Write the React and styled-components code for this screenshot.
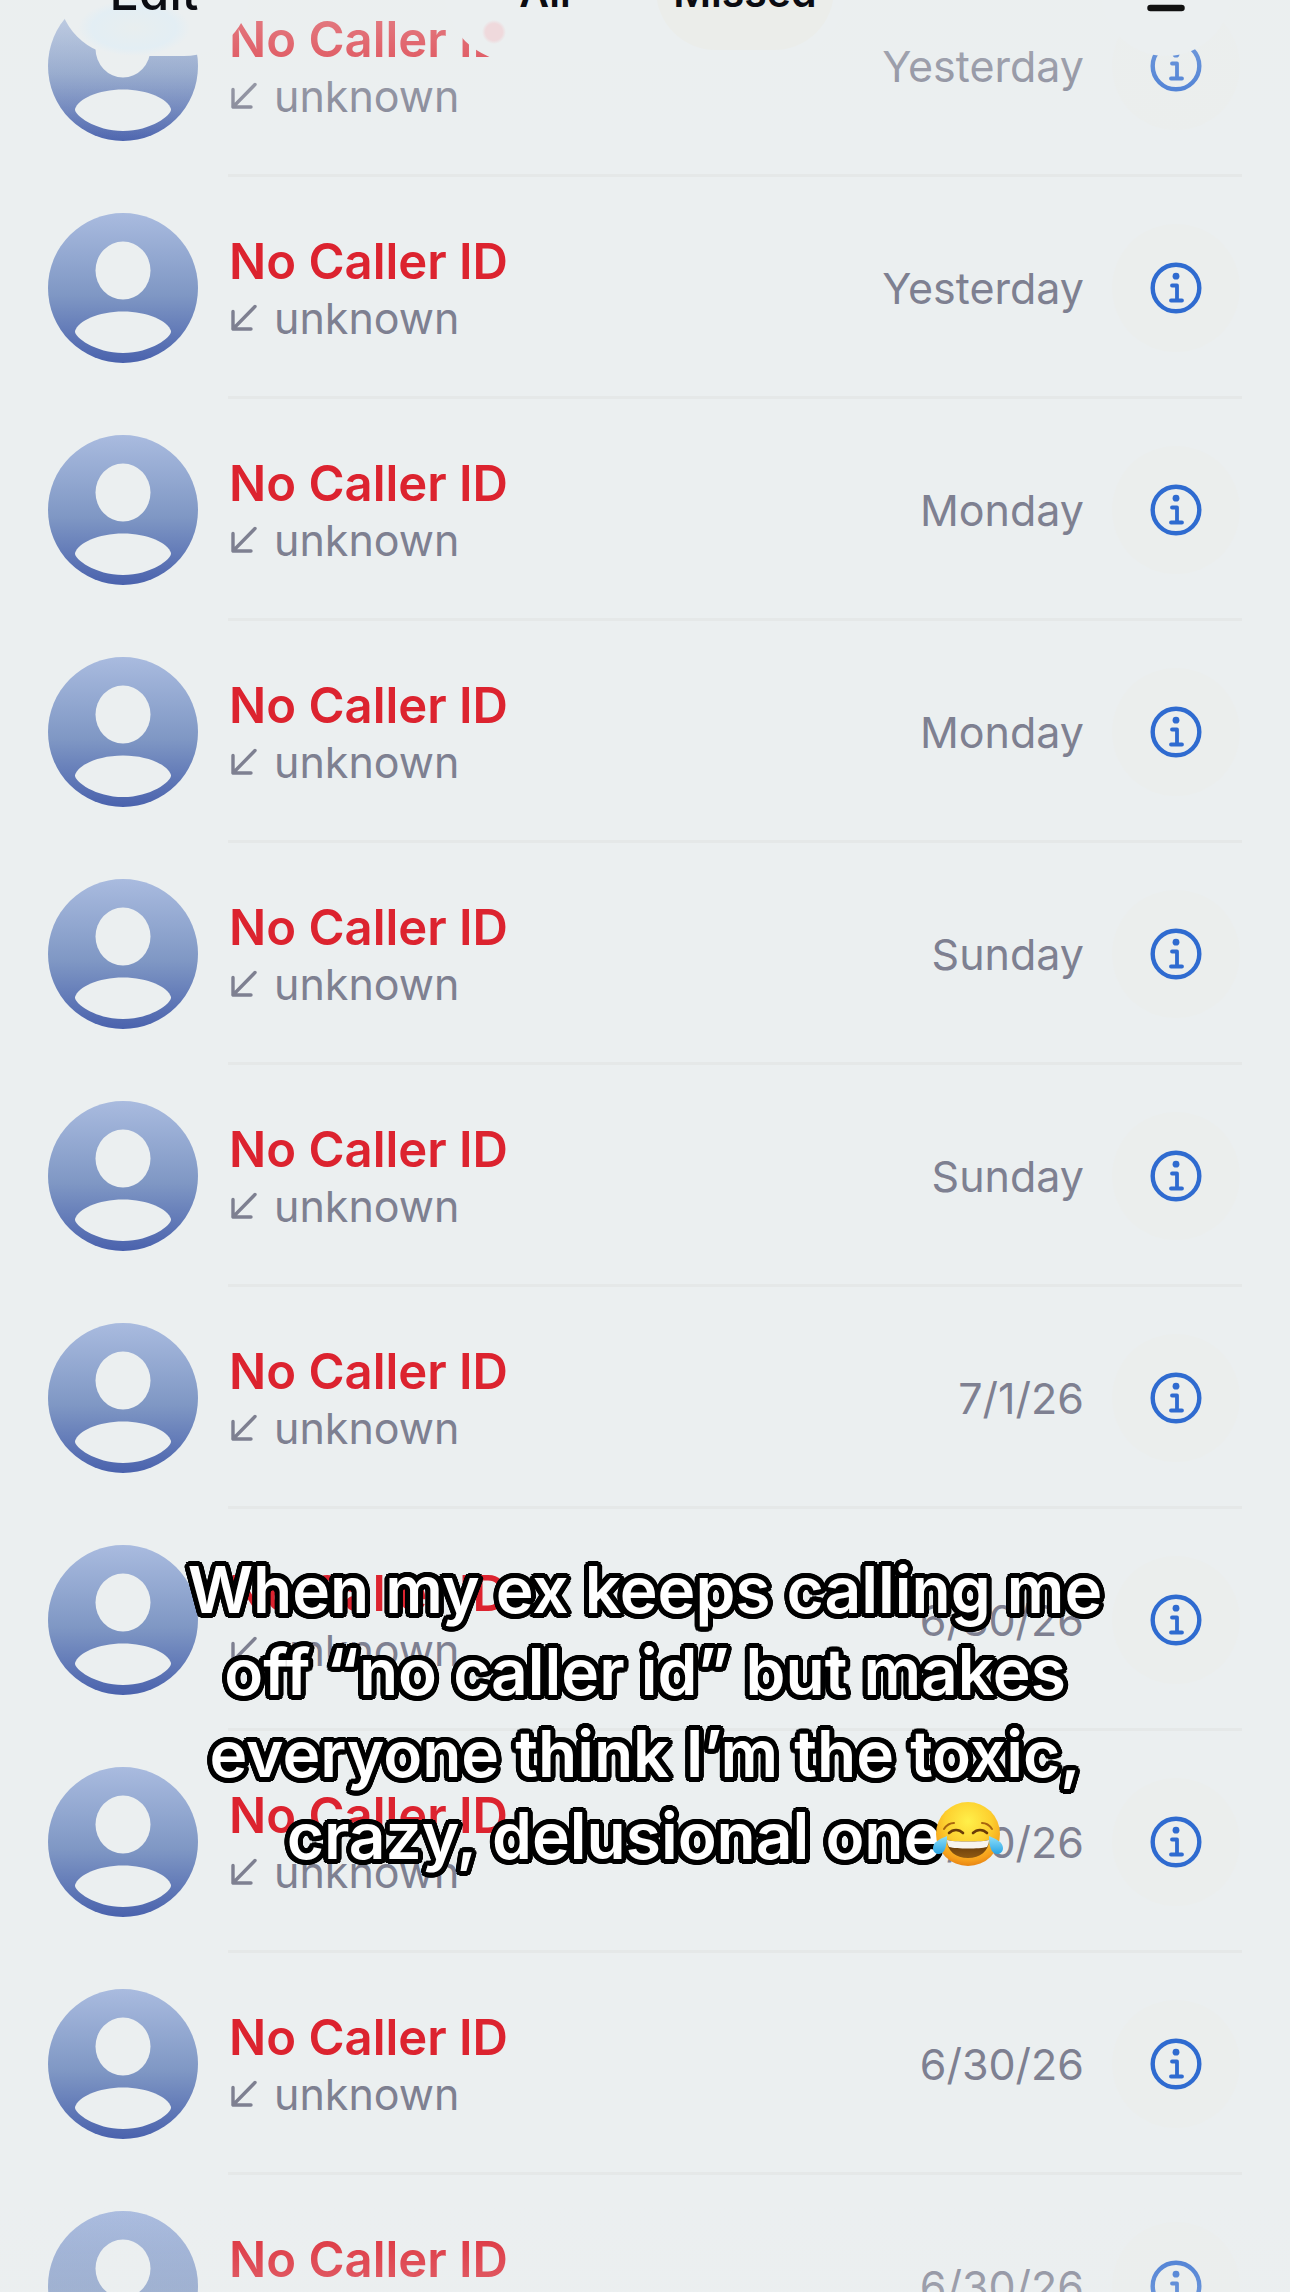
import React from "react";
import styled, { createGlobalStyle } from "styled-components";

const calls = [
  { id: 1, day: "Yesterday" },
  { id: 2, day: "Yesterday" },
  { id: 3, day: "Monday" },
  { id: 4, day: "Monday" },
  { id: 5, day: "Sunday" },
  { id: 6, day: "Sunday" },
  { id: 7, day: "7/1/26" },
  { id: 8, day: "6/30/26" },
  { id: 9, day: "6/30/26" },
  { id: 10, day: "6/30/26" },
  { id: 11, day: "6/30/26" }
];

// ring of hard shadows, gives the caption its round black outline
const outline = Array.from({ length: 24 }, (_, i) => {
  const a = (i / 24) * Math.PI * 2;
  return `${(Math.cos(a) * 5).toFixed(2)}px ${(Math.sin(a) * 5).toFixed(2)}px 0 #000`;
}).join(", ");

const GlobalStyle = createGlobalStyle`
  * {
    box-sizing: border-box;
  }

  body {
    margin: 0;
    background: #ebeff0;
    font-family: Inter, "Liberation Sans", sans-serif;
  }

  button {
    padding: 0;
    border: none;
    background: none;
    font-family: inherit;
    cursor: pointer;
  }
`;

const Screen = styled.main`
  position: relative;
  height: 100vh;
  overflow: hidden;
  background: #ebeff0;
`;

const Toolbar = styled.header`
  position: absolute;
  z-index: 2;
  top: -82px;
  left: 0;
  right: 0;
  padding: 0 58px;
  display: grid;
  grid-template-columns: 1fr auto 1fr;
  align-items: center;
`;

const EditButton = styled.button`
  justify-self: start;
  width: 192px;
  height: 132px;
  padding-top: 4px;
  border-radius: 66px;
  background: radial-gradient(
      ellipse 56px 28px at 76px 104px,
      #e8eeef 0,
      #e3eef4 75%,
      transparent 100%
    ),
    #ebeff0;
  color: #0b0c12;
  font-size: 49px;
  font-weight: 500;
`;

const Segments = styled.div`
  display: flex;
  gap: 22px;
  padding: 12px;
  border-radius: 72px;
  background: radial-gradient(circle 12px at 50px 114px, #efd9dc 0 70%, transparent 100%),
    #ebeff0;
`;

const Segment = styled.button`
  width: 178px;
  height: 120px;
  padding-top: 4px;
  border-radius: 60px;
  background: ${props => (props.$active ? "#ebedea" : "transparent")};
  color: #0b0c12;
  font-size: 41px;
  font-weight: 600;
`;

const FilterButton = styled.button`
  justify-self: end;
  display: flex;
  align-items: center;
  justify-content: center;
  width: 132px;
  height: 132px;
  border-radius: 50%;
  background: #ebeff0;
`;

const CallList = styled.ul`
  margin: -45px 0 0;
  padding: 0;
  list-style: none;
`;

const Row = styled.li`
  display: flex;
  gap: 30px;
  padding: 0 48px;
`;

const Avatar = styled.svg`
  flex: none;
  align-self: center;
  width: 150px;
  height: 150px;
`;

const RowBody = styled.div`
  flex: 1;
  display: flex;
  align-items: center;
  height: 222px;
  padding-top: 2px;
  border-bottom: 3px solid #e5e8e8;
`;

const Caller = styled.div`
  flex: 1;
`;

const Name = styled.div`
  padding-left: 1px;
  color: #dc232f;
  font-size: 49px;
  font-weight: 600;
  line-height: 60px;
`;

const Label = styled.div`
  display: flex;
  align-items: center;
  gap: 16px;
  padding-left: 2px;
  color: #7e8091;
  font-size: 43px;
  line-height: 52px;
`;

const Day = styled.time`
  color: #7e8091;
  font-size: 43px;
`;

const InfoButton = styled.button`
  display: flex;
  align-items: center;
  justify-content: center;
  width: 128px;
  height: 128px;
  margin: 0 2px 0 28px;
  border-radius: 50%;
  background: #ebeeed;
`;

const Fade = styled.div`
  position: absolute;
  left: 0;
  right: 0;
  pointer-events: none;
`;

const TopFade = styled(Fade)`
  top: 0;
  height: 150px;
  background: linear-gradient(rgba(235, 239, 239, 0.48), rgba(235, 239, 239, 0));
`;

const BottomFade = styled(Fade)`
  bottom: 0;
  height: 90px;
  background: linear-gradient(rgba(235, 238, 239, 0), rgba(235, 238, 239, 0.3));
`;

const Caption = styled.p`
  position: absolute;
  z-index: 3;
  top: 1549px;
  left: 0;
  right: 0;
  margin: 0;
  color: #fff;
  font-size: 64px;
  font-weight: 600;
  line-height: 82px;
  text-align: center;
  text-shadow: ${outline};
`;

const Emoji = styled.svg`
  width: 70px;
  height: 66px;
  margin-left: -8px;
  vertical-align: -8px;
`;

const Person = () => (
  <Avatar viewBox="0 0 150 150" aria-hidden="true">
    <defs>
      <linearGradient id="avatar" x1="0" y1="0" x2="0" y2="1">
        <stop offset="0" stopColor="#a9bbdf" />
        <stop offset="0.55" stopColor="#7f97c4" />
        <stop offset="1" stopColor="#4a62ad" />
      </linearGradient>
    </defs>
    <circle cx="75" cy="75" r="75" fill="url(#avatar)" />
    <ellipse cx="75" cy="57.500" rx="27.500" ry="29" fill="#ebeff0" />
    <path
      d="M27 118C30 108 50 98.500 75 98.500s45 9.500 48 19.500c1 6-20 22-48 22s-49-16-48-22z"
      fill="#ebeff0"
    />
  </Avatar>
);

const IncomingArrow = () => (
  <svg width="28" height="28" viewBox="0 0 28 28" fill="none" aria-hidden="true">
    <path
      d="M25 2.500L3 25M3 7.500V25h18"
      stroke="#7e8091"
      strokeWidth="3.400"
      strokeLinecap="round"
      strokeLinejoin="round"
    />
  </svg>
);

const InfoIcon = () => (
  <svg width="52" height="52" viewBox="0 0 52 52" fill="none" aria-hidden="true">
    <circle cx="26" cy="26" r="23.3" stroke="#2f6bd0" strokeWidth="4.4" />
    <circle cx="26" cy="14.2" r="3.4" fill="#2f6bd0" />
    <path
      d="M22 23.500h5v15M21 38.500h11"
      stroke="#2f6bd0"
      strokeWidth="3.800"
      strokeLinecap="round"
      strokeLinejoin="round"
    />
  </svg>
);

const FilterIcon = () => (
  <svg width="72" height="48" viewBox="0 0 72 48" aria-hidden="true">
    <path
      d="M6 6h60M13 24h46M20.500 42h31"
      stroke="#111"
      strokeWidth="6.500"
      strokeLinecap="round"
    />
  </svg>
);

const JoyEmoji = () => (
  <Emoji viewBox="0 0 70 66" role="img" aria-label="face with tears of joy">
    <defs>
      <radialGradient id="face" cx="0.5" cy="0.3" r="0.72">
        <stop offset="0" stopColor="#fff04a" />
        <stop offset="0.5" stopColor="#fdd02f" />
        <stop offset="0.85" stopColor="#f6a01c" />
        <stop offset="1" stopColor="#e57f12" />
      </radialGradient>
      <linearGradient id="mouth" x1="0" y1="0" x2="0" y2="1">
        <stop offset="0" stopColor="#5a3008" />
        <stop offset="1" stopColor="#8f5a12" />
      </linearGradient>
      <linearGradient id="tear" x1="0" y1="0" x2="0" y2="1">
        <stop offset="0" stopColor="#8fe0fa" />
        <stop offset="1" stopColor="#2aa4e4" />
      </linearGradient>
    </defs>
    <circle cx="35" cy="33" r="32" fill="url(#face)" />
    <path
      d="M11 28c2-3 5-6 10-6M49 22c5 0 8 3 10 6"
      fill="none"
      stroke="#a8650f"
      strokeWidth="2"
      strokeLinecap="round"
    />
    <path
      d="M16 32c4-4 10-4 14 0M40 32c4-4 10-4 14 0"
      fill="none"
      stroke="#6b3c08"
      strokeWidth="2.6"
      strokeLinecap="round"
    />
    <path d="M14 39c6 2 36 2 42 0 0 11-9 18-21 18s-21-7-21-18z" fill="url(#mouth)" />
    <path d="M14 39c6 2 36 2 42 0 0 3-1 5-2 7-8 2-30 2-38 0-1-2-2-4-2-7z" fill="#f8f4ee" />
    <path
      d="M14 35c-7 3-14 6-14 12 0 4 3 6 6 6 6 0 8-9 8-18zM56 35c7 3 14 6 14 12 0 4-3 6-6 6-6 0-8-9-8-18z"
      fill="url(#tear)"
    />
  </Emoji>
);

const CallRow = ({ day }) => (
  <Row>
    <Person />
    <RowBody>
      <Caller>
        <Name>No Caller ID</Name>
        <Label>
          <IncomingArrow />
          unknown
        </Label>
      </Caller>
      <Day>{day}</Day>
      <InfoButton type="button" aria-label="Call details">
        <InfoIcon />
      </InfoButton>
    </RowBody>
  </Row>
);

const App = () => (
  <Screen>
    <GlobalStyle />

    <Toolbar>
      <EditButton type="button">Edit</EditButton>
      <Segments>
        <Segment type="button">All</Segment>
        <Segment type="button" $active>
          Missed
        </Segment>
      </Segments>
      <FilterButton type="button" aria-label="Filter">
        <FilterIcon />
      </FilterButton>
    </Toolbar>

    <CallList>
      {calls.map(call => (
        <CallRow key={call.id} day={call.day} />
      ))}
    </CallList>

    <TopFade />
    <BottomFade />

    <Caption>
      When my ex keeps calling me
      <br />
      off “no caller id” but makes
      <br />
      everyone think I’m the toxic,
      <br />
      crazy, delusional one
      <JoyEmoji />
    </Caption>
  </Screen>
);

export default App;
